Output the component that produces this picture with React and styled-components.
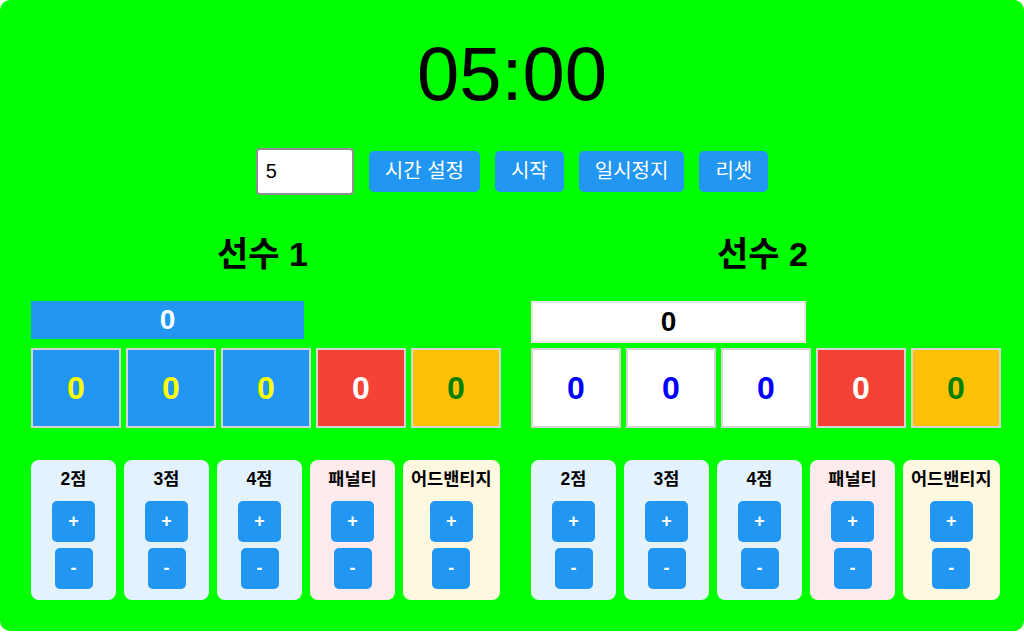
import React, { useState } from 'react';
import styled, { createGlobalStyle } from 'styled-components';

const GlobalStyle = createGlobalStyle`
  html, body {
    margin: 0;
    padding: 0;
    background: #fff;
    font-family: "Liberation Sans", "Noto Sans CJK KR", sans-serif;
  }
  * {
    box-sizing: border-box;
  }
`;

const Board = styled.div`
  background: #00ff00;
  border-radius: 10px;
  padding: 36px 20px 31px;
  width: 1024px;
  height: 631px;
`;

const Timer = styled.div`
  font-size: 76px;
  line-height: 1;
  text-align: center;
  color: #000;
`;

const Controls = styled.div`
  display: flex;
  justify-content: center;
  align-items: center;
  gap: 15px;
  margin-top: 36px;
`;

const MinuteInput = styled.input`
  width: 98px;
  height: 47px;
  padding: 0 8px;
  border: 2px solid #8f8f8f;
  border-radius: 4px;
  font-family: inherit;
  font-size: 20px;
  color: #000;
  background: #fff;
  outline: none;
`;

const Button = styled.button`
  background: #2196f3;
  color: #fff;
  border: none;
  border-radius: 5px;
  padding: 10px 16px;
  font-family: inherit;
  font-size: 20px;
  line-height: 21px;
  cursor: pointer;
`;

const Players = styled.div`
  display: flex;
  gap: 16px;
  margin-top: 39px;
`;

const Player = styled.div`
  flex: 1;
  min-width: 0;
  padding: 0 10px 0 11px;
`;

const PlayerName = styled.h2`
  margin: 0 0 27px;
  font-size: 34px;
  line-height: 40px;
  font-weight: bold;
  text-align: center;
  color: #000;
`;

const TotalSlot = styled.div`
  height: 42px;
  margin-bottom: 5px;
`;

const Total = styled.div`
  width: ${(p) => (p.$light ? '275px' : '273px')};
  height: ${(p) => (p.$light ? '42px' : '38px')};
  background: ${(p) => (p.$light ? '#fff' : '#2196f3')};
  border: ${(p) => (p.$light ? '2px solid #e6e6e6' : 'none')};
  color: ${(p) => (p.$light ? '#000' : '#fff')};
  display: flex;
  align-items: center;
  justify-content: center;
  font-size: 28px;
  font-weight: bold;
`;

const Tiles = styled.div`
  display: flex;
  gap: 5px;
`;

const Tile = styled.div`
  flex: 0 0 90px;
  height: 80px;
  border: 2px solid #d4d4d4;
  background: ${(p) => p.$bg};
  color: ${(p) => p.$fg};
  display: flex;
  align-items: center;
  justify-content: center;
  font-size: 32px;
  font-weight: bold;
`;

const Cards = styled.div`
  display: flex;
  gap: 8px;
  margin-top: 32px;
`;

const Card = styled.div`
  flex-shrink: 0;
  min-width: 85px;
  padding: 10px 8px 11px;
  border-radius: 8px;
  background: ${(p) => p.$bg};
  display: flex;
  flex-direction: column;
  align-items: center;
  gap: 6px;
`;

const CardTitle = styled.div`
  font-size: 17.5px;
  line-height: 19px;
  font-weight: bold;
  color: #000;
  margin-bottom: 6px;
  white-space: nowrap;
`;

const SmallButton = styled(Button)`
  font-size: 18px;
  font-weight: bold;
  padding: 10px 16px;
`;

const scoreKinds = [
  { key: 'p2', label: '2점', bg: '#e3f2fd' },
  { key: 'p3', label: '3점', bg: '#e3f2fd' },
  { key: 'p4', label: '4점', bg: '#e3f2fd' },
  { key: 'pen', label: '패널티', bg: '#ffebee' },
  { key: 'adv', label: '어드밴티지', bg: '#fff8e1' },
];

const empty = { p2: 0, p3: 0, p4: 0, pen: 0, adv: 0 };

function PlayerPanel({ name, light, scores, onChange }) {
  const total = scores.p2 * 2 + scores.p3 * 3 + scores.p4 * 4;
  const pointBg = light ? '#fff' : '#2196f3';
  const pointFg = light ? '#0000ff' : '#ffff00';
  return (
    <Player>
      <PlayerName>{name}</PlayerName>
      <TotalSlot>
        <Total $light={light}>{total}</Total>
      </TotalSlot>
      <Tiles>
        <Tile $bg={pointBg} $fg={pointFg}>{scores.p2}</Tile>
        <Tile $bg={pointBg} $fg={pointFg}>{scores.p3}</Tile>
        <Tile $bg={pointBg} $fg={pointFg}>{scores.p4}</Tile>
        <Tile $bg="#f44336" $fg="#fff">{scores.pen}</Tile>
        <Tile $bg="#ffc107" $fg="#008000">{scores.adv}</Tile>
      </Tiles>
      <Cards>
        {scoreKinds.map((k) => (
          <Card key={k.key} $bg={k.bg}>
            <CardTitle>{k.label}</CardTitle>
            <SmallButton onClick={() => onChange(k.key, 1)}>+</SmallButton>
            <SmallButton onClick={() => onChange(k.key, -1)}>-</SmallButton>
          </Card>
        ))}
      </Cards>
    </Player>
  );
}

export default function App() {
  const [minutes, setMinutes] = useState('5');
  const [seconds, setSeconds] = useState(300);
  const [one, setOne] = useState(empty);
  const [two, setTwo] = useState(empty);

  const mm = String(Math.floor(seconds / 60)).padStart(2, '0');
  const ss = String(seconds % 60).padStart(2, '0');

  const bump = (setter) => (key, d) =>
    setter((s) => ({ ...s, [key]: Math.max(0, s[key] + d) }));

  return (
    <>
      <GlobalStyle />
      <Board>
        <Timer>
          {mm}:{ss}
        </Timer>
        <Controls>
          <MinuteInput
            type="number"
            value={minutes}
            onChange={(e) => setMinutes(e.target.value)}
          />
          <Button onClick={() => setSeconds((parseInt(minutes, 10) || 0) * 60)}>
            시간 설정
          </Button>
          <Button>시작</Button>
          <Button>일시정지</Button>
          <Button onClick={() => setSeconds((parseInt(minutes, 10) || 0) * 60)}>
            리셋
          </Button>
        </Controls>
        <Players>
          <PlayerPanel name="선수 1" scores={one} onChange={bump(setOne)} />
          <PlayerPanel name="선수 2" light scores={two} onChange={bump(setTwo)} />
        </Players>
      </Board>
    </>
  );
}
